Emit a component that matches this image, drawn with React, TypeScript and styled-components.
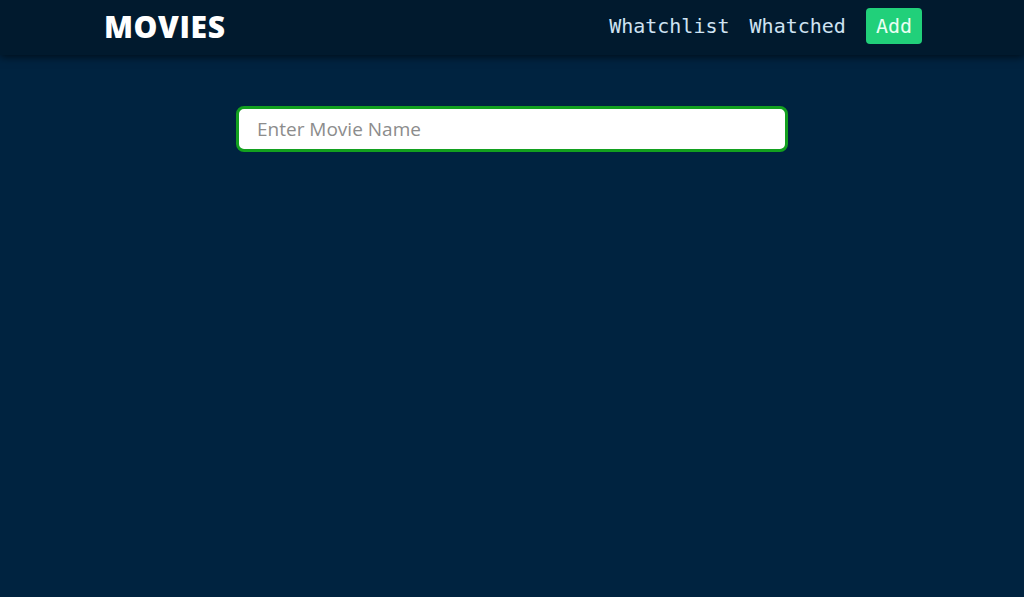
import React from "react";
import styled, { createGlobalStyle } from "styled-components";

const Global = createGlobalStyle`
  html, body { margin: 0; padding: 0; }
  body {
    background: #002340;
    min-height: 597px;
    font-family: "Comic Sans MS", "Comic Neue", "Open Sans", sans-serif;
  }
`;

const Header = styled.header`
  background: #011a2e;
  padding: 8px 0 11px;
  box-shadow: 0 2px 8px rgba(0, 0, 0, 0.6);
`;

const Container = styled.div`
  max-width: 820px;
  height: 36px;
  margin: 0 auto;
  display: flex;
  align-items: center;
  justify-content: space-between;
`;

const Brand = styled.a`
  font-family: "Comic Sans MS", "Open Sans", sans-serif;
  font-weight: 800;
  font-size: 30px;
  color: #ffffff;
  text-decoration: none;
  letter-spacing: 0.6px;
  padding-left: 2px;
`;

const Nav = styled.nav`
  display: flex;
  align-items: center;
  gap: 20px;
`;

const NavLink = styled.a<{ $primary?: boolean }>`
  font-family: "DejaVu Sans Mono", "Liberation Mono", monospace;
  font-size: 20px;
  color: ${(p) => (p.$primary ? "#e9fff3" : "#cfe3f2")};
  text-decoration: none;
  background: ${(p) => (p.$primary ? "#21d07a" : "transparent")};
  border-radius: ${(p) => (p.$primary ? "4px" : "0")};
  padding: ${(p) => (p.$primary ? "6px 10px" : "0")};
  line-height: 24px;
`;

const Main = styled.main`
  display: flex;
  justify-content: center;
  padding-top: 51px;
`;

const Input = styled.input`
  box-sizing: border-box;
  width: 552px;
  height: 46px;
  border: 3px solid #13a01f;
  border-radius: 8px;
  background: #fff;
  padding: 0 18px;
  font-family: "Comic Sans MS", "Open Sans", sans-serif;
  font-size: 19px;
  outline: none;
  &::placeholder { color: #8c8c8c; }
`;

export default function App() {
  return (
    <>
      <Global />
      <Header>
        <Container>
          <Brand href="#">MOVIES</Brand>
          <Nav>
            <NavLink href="#">Whatchlist</NavLink>
            <NavLink href="#">Whatched</NavLink>
            <NavLink href="#" $primary>Add</NavLink>
          </Nav>
        </Container>
      </Header>
      <Main>
        <Input placeholder="Enter Movie Name" />
      </Main>
    </>
  );
}
